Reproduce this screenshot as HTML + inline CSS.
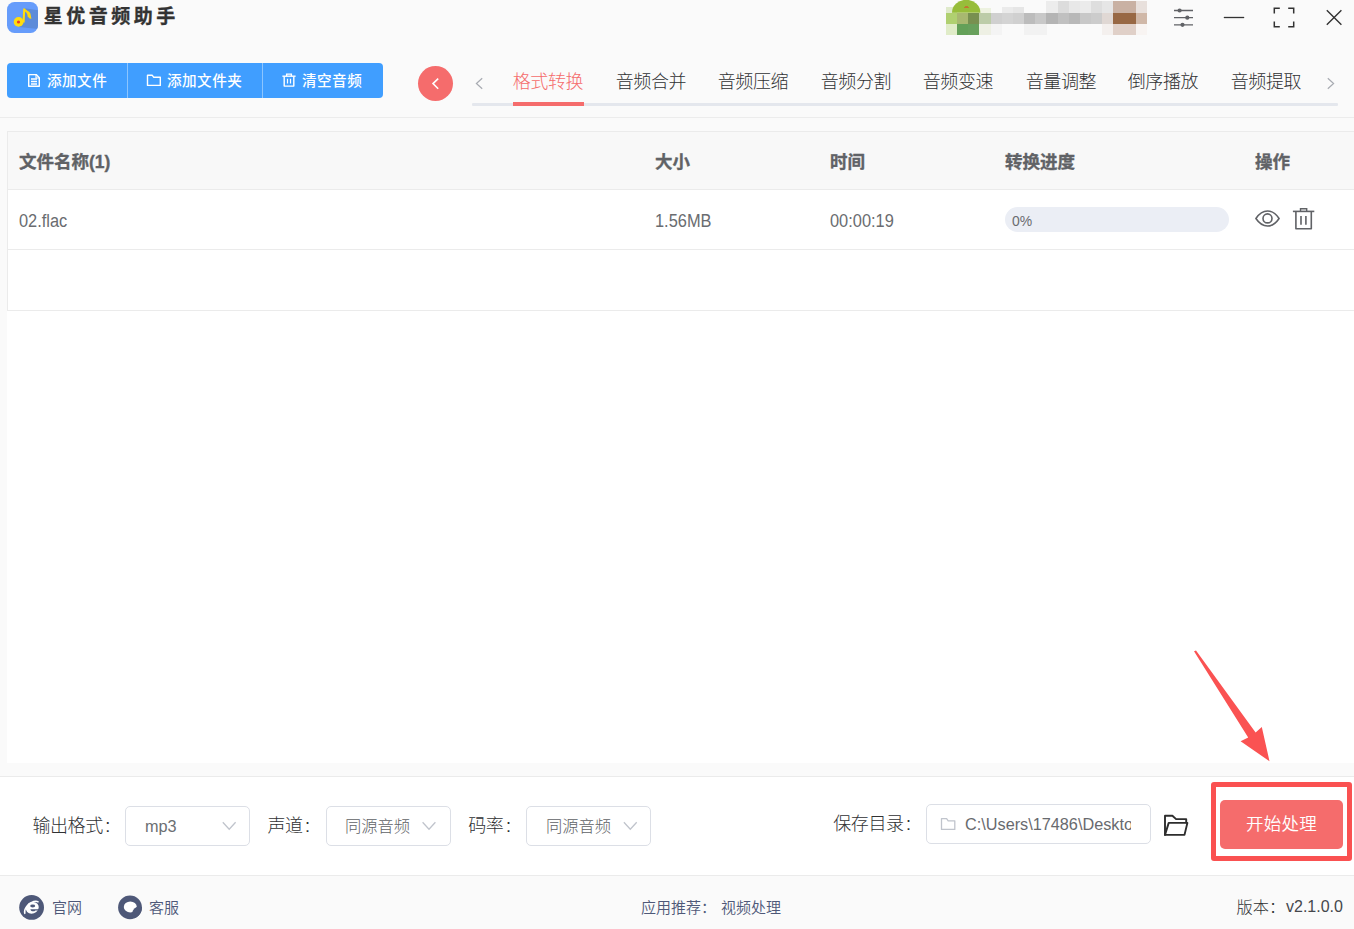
<!DOCTYPE html>
<html lang="zh-CN">
<head>
<meta charset="utf-8">
<title>星优音频助手</title>
<style>
*{box-sizing:border-box;margin:0;padding:0}
html,body{width:1354px;height:929px;overflow:hidden;background:#fafafa}
body{font-family:"Liberation Sans","Noto Sans CJK SC",sans-serif;color:#606266;position:relative}
.abs{position:absolute;white-space:nowrap}
/* title bar */
#logo{left:7px;top:2px;width:31px;height:31px}
#title{left:43.7px;top:1.5px;font-size:19px;line-height:30px;font-weight:700;color:#333;letter-spacing:3.5px;-webkit-text-stroke:.3px #333}
/* toolbar */
#btnbar{left:7px;top:63px;width:376px;height:35px;background:#409eff;border-radius:4px}
.tb{top:63.8px;height:35px;line-height:35px;color:#fff;font-size:14.6px;letter-spacing:.45px;font-weight:500}
.tbdiv{top:63px;width:1px;height:35px;background:#8cc5ff}
#back{left:418px;top:66px;width:35px;height:35px;border-radius:50%;background:#f56c6c}
/* tabs */
.tab{top:67.5px;height:28px;line-height:28px;font-size:18px;letter-spacing:-.4px;color:#303133;font-weight:300;margin-left:-.3px}
.tab.on{color:#f56c6c}
#tabline{left:472px;top:103px;width:866px;height:3px;background:#e4e7ed;border-radius:1px}
#tabon{left:513px;top:102px;width:71px;height:4px;background:#f56c6c}
#hline{left:0;top:117px;width:1354px;height:1px;background:#ececec}
/* table */
#table{left:7px;top:131px;width:1347px;height:632px;background:#fff}
#tleft{left:7px;top:131px;width:1px;height:180px;background:#ebebeb}
#thead{left:7px;top:131px;width:1347px;height:59px;background:#f8f8f8;border:1px solid #ebebeb;border-right:0}
.th{top:147px;height:30px;line-height:30px;font-size:17.5px;font-weight:700;color:#606266;-webkit-text-stroke:.35px #606266}
.td{top:206px;height:30px;line-height:30px;font-size:18px;color:#6a6c70;font-weight:300;transform:scaleX(.91);transform-origin:0 50%}
.rowline{left:8px;width:1346px;height:1px;background:#ebebeb}
#prog{left:1005px;top:207px;width:224px;height:25px;border-radius:13px;background:#ebeef5}
#progt{left:1011.5px;top:207.5px;height:25px;line-height:25px;font-size:15.5px;color:#6a6c70;transform:scaleX(.9);transform-origin:0 50%}
/* bottom panel */
#bottom{left:0;top:776px;width:1354px;height:100px;background:#fff;border-top:1px solid #ebebeb;border-bottom:1px solid #ebebeb}
.lbl{height:30px;line-height:30px;font-size:18px;letter-spacing:-.4px;margin-left:-.6px;margin-top:-.4px;color:#303133;font-weight:300}
.cl{margin-left:2.5px}
.sel{top:806px;width:125px;height:40px;border:1px solid #dcdfe6;border-radius:5px;background:#fff}
.selt{top:811px;height:30px;line-height:30px;font-size:16.25px;color:#606266;font-weight:300}
#dir{left:926px;top:804px;width:225px;height:40px;border:1px solid #dcdfe6;border-radius:5px;background:#fff}
#dirt{left:965px;top:809px;width:165.6px;overflow:hidden;height:30px;line-height:30px;font-size:16.25px;color:#686a6e}
#go{left:1220px;top:800px;width:123px;height:49px;border-radius:5px;background:#f56c6c;color:#fff;font-size:17.5px;line-height:48px;text-align:center;font-weight:350;letter-spacing:0.2px}
#mark{left:1211px;top:782px;width:141px;height:79px;border:5px solid #fa5151;border-radius:3px}
/* footer */
.ft{top:893px;height:30px;line-height:30px;font-size:15px;color:#4e5878;font-weight:350}
.fc{top:895px;width:25px;height:25px;border-radius:50%;background:#4d5675}
#ver{left:1236.5px;top:892px;height:30px;line-height:30px;font-size:16.25px;color:#303133;font-weight:300}
svg{position:absolute;overflow:visible}
</style>
</head>
<body>
<!-- TITLE BAR -->
<svg id="logo" class="abs" viewBox="0 0 31 31">
  <defs><clipPath id="lc"><rect width="31" height="31" rx="7.5"/></clipPath></defs>
  <rect width="31" height="31" rx="7.5" fill="#669cfb"/>
  <g clip-path="url(#lc)">
    <polygon points="17.5,6.2 31,8.2 31,27 12,25" fill="#5c8bd9"/>
  </g>
  <path d="M16.2 6.6 L18.3 6.6 L17.6 20.5 L15.4 20.5 Z" fill="#ffdc10"/>
  <path d="M17.8 6.8 C20 9 23.2 9.2 23.6 12.4 L24.4 16.8 L22.6 16.4 L20.6 14.6 C20.8 12.2 19.4 10.6 17.8 9.6 Z" fill="#ffd60a"/>
  <circle cx="11.6" cy="19.9" r="4.9" fill="#ffdc10"/>
  <circle cx="11.5" cy="20" r="1.6" fill="#ee3a2a"/>
</svg>
<div id="title" class="abs">星优音频助手</div>

<!-- mosaic user area -->
<svg class="abs" id="mosaic" style="left:946px;top:0;width:202px;height:36px" viewBox="0 0 202 36" shape-rendering="crispEdges">
  <rect x="0.0" y="6.5" width="11.26" height="6.2" fill="#dfeacb"/>
  <rect x="33.48" y="7.5" width="11.26" height="5.2" fill="#edf2e0"/>
  <rect x="55.8" y="7" width="11.26" height="5.7" fill="#ebebeb"/>
  <rect x="66.96" y="7" width="11.26" height="5.7" fill="#e6e6e6"/>
  <rect x="100.44" y="1" width="11.26" height="11.7" fill="#ececec"/>
  <rect x="111.6" y="1" width="11.26" height="11.7" fill="#dcdcdc"/>
  <rect x="122.76" y="1" width="11.26" height="11.7" fill="#e8e8e8"/>
  <rect x="133.92" y="1" width="11.26" height="11.7" fill="#ebebeb"/>
  <rect x="145.08" y="1" width="11.26" height="11.7" fill="#dedede"/>
  <rect x="156.24" y="1" width="11.26" height="11.7" fill="#e6e6e6"/>
  <rect x="167.4" y="1" width="11.26" height="11.7" fill="#c9b1a3"/>
  <rect x="178.56" y="1" width="11.26" height="11.7" fill="#c9b1a3"/>
  <rect x="189.72" y="1" width="11.26" height="11.7" fill="#e8e0dc"/>
  <rect x="0.0" y="12.7" width="11.26" height="11.1" fill="#b0d070"/>
  <rect x="11.16" y="12.7" width="11.26" height="11.1" fill="#a8b870"/>
  <rect x="22.32" y="12.7" width="11.26" height="11.1" fill="#789050"/>
  <rect x="33.48" y="12.7" width="11.26" height="11.1" fill="#bccca8"/>
  <rect x="44.64" y="12.7" width="11.26" height="11.1" fill="#d0d0d0"/>
  <rect x="55.8" y="12.7" width="11.26" height="11.1" fill="#d4d4d4"/>
  <rect x="66.96" y="12.7" width="11.26" height="11.1" fill="#d0d0d0"/>
  <rect x="78.12" y="12.7" width="11.26" height="11.1" fill="#bcbcbc"/>
  <rect x="89.28" y="12.7" width="11.26" height="11.1" fill="#c8c8c8"/>
  <rect x="100.44" y="12.7" width="11.26" height="11.1" fill="#b4b4b4"/>
  <rect x="111.6" y="12.7" width="11.26" height="11.1" fill="#c0c0c0"/>
  <rect x="122.76" y="12.7" width="11.26" height="11.1" fill="#b8b8b8"/>
  <rect x="133.92" y="12.7" width="11.26" height="11.1" fill="#c8c8c8"/>
  <rect x="145.08" y="12.7" width="11.26" height="11.1" fill="#cccccc"/>
  <rect x="156.24" y="12.7" width="11.26" height="11.1" fill="#e0d8d4"/>
  <rect x="167.4" y="12.7" width="11.26" height="11.1" fill="#986844"/>
  <rect x="178.56" y="12.7" width="11.26" height="11.1" fill="#986844"/>
  <rect x="189.72" y="12.7" width="11.26" height="11.1" fill="#d0b8a8"/>
  <rect x="0.0" y="23.8" width="11.26" height="11.0" fill="#e0ecc8"/>
  <rect x="11.16" y="23.8" width="11.26" height="11.0" fill="#64a058"/>
  <rect x="22.32" y="23.8" width="11.26" height="11.0" fill="#68a05c"/>
  <rect x="33.48" y="23.8" width="11.26" height="11.0" fill="#eef0e4"/>
  <rect x="44.64" y="23.8" width="11.26" height="11.0" fill="#f4f4f4"/>
  <rect x="78.12" y="23.8" width="11.26" height="11.0" fill="#f2f2f2"/>
  <rect x="89.28" y="23.8" width="11.26" height="11.0" fill="#f2f2f2"/>
  <rect x="156.24" y="23.8" width="11.26" height="11.0" fill="#f4f0ee"/>
  <rect x="167.4" y="23.8" width="11.26" height="11.0" fill="#e0d0c8"/>
  <rect x="178.56" y="23.8" width="11.26" height="11.0" fill="#e0d0c8"/>
  <rect x="189.72" y="23.8" width="11.26" height="11.0" fill="#f8f4f2"/>
  <path d="M6 12.8 A14.2 13 0 0 1 34.4 12.8 Z" fill="#97bd3a" shape-rendering="geometricPrecision"/>
  <ellipse cx="20.5" cy="7.3" rx="3" ry="1" fill="#c07830"/>
</svg>

<!-- window controls -->
<svg class="abs" style="left:1170px;top:4px;width:180px;height:28px" viewBox="1170 4 180 28" fill="none">
  <g stroke="#606266" stroke-width="1.3">
    <path d="M1174 10.5H1193M1174 17.7H1193M1174 24.8H1193"/>
  </g>
  <g fill="#606266"><circle cx="1179.6" cy="10.5" r="2.1"/><circle cx="1187.3" cy="17.7" r="2.1"/><circle cx="1182.5" cy="24.8" r="2.1"/></g>
  <path d="M1223.8 17.5H1244.2" stroke="#333" stroke-width="1.3"/>
  <path d="M1274.3 13.5V8.2H1279.8M1288.2 8.2H1293.7V13.5M1293.7 21.5V26.8H1288.2M1279.8 26.8H1274.3V21.5" stroke="#333" stroke-width="1.5"/>
  <path d="M1326.8 10.2L1341.4 24.8M1341.4 10.2L1326.8 24.8" stroke="#333" stroke-width="1.4"/>
</svg>

<!-- TOOLBAR -->
<div id="btnbar" class="abs"></div>
<div class="tbdiv abs" style="left:127px"></div>
<div class="tbdiv abs" style="left:262px"></div>
<div class="tb abs" style="left:47px">添加文件</div>
<div class="tb abs" style="left:167px">添加文件夹</div>
<div class="tb abs" style="left:302px">清空音频</div>

<div id="back" class="abs"></div>

<svg class="abs" style="left:0;top:60px;width:1354px;height:50px" viewBox="0 60 1354 50" fill="none">
  <!-- document icon -->
  <g stroke="#fff" stroke-width="1.4" stroke-linejoin="round">
    <path d="M28.7 74.6H36.2L39.3 77.8V86.2H28.7Z"/>
    <path d="M36 74.8V78H39.2" stroke-width="1.1"/>
    <path d="M31 79H37M31 81.5H37M31 84H37" stroke-width="1.5"/>
  </g>
  <!-- folder icon -->
  <path d="M147.5 75.3H152.3L153.8 77.3H160.3V85.4H147.5Z" stroke="#fff" stroke-width="1.4" stroke-linejoin="round"/>
  <!-- trash icon -->
  <g stroke="#fff" stroke-width="1.4">
    <path d="M282.4 76.2H295.6"/>
    <path d="M286.6 76V74.2H291.4V76" stroke-width="1.3"/>
    <path d="M284.2 76.4V86.1H293.8V76.4" stroke-linejoin="round"/>
    <path d="M287.5 78.8V83.6M290.5 78.8V83.6" stroke-width="1.2"/>
  </g>
  <!-- back chevron -->
  <path d="M438.2 78.6L433 83.6L438.2 88.7" stroke="#fff" stroke-width="1.6"/>
  <!-- tab arrows -->
  <path d="M482.2 78.2L476.4 83.5L482.2 88.8" stroke="#a8abb2" stroke-width="1.2"/>
  <path d="M1327.8 78.2L1333.6 83.5L1327.8 88.8" stroke="#a8abb2" stroke-width="1.2"/>
</svg>
<!-- TABS -->
<div id="tabline" class="abs"></div>
<div id="tabon" class="abs"></div>
<div class="tab on abs" style="left:513px">格式转换</div>
<div class="tab abs" style="left:616px">音频合并</div>
<div class="tab abs" style="left:718px">音频压缩</div>
<div class="tab abs" style="left:821px">音频分割</div>
<div class="tab abs" style="left:923px">音频变速</div>
<div class="tab abs" style="left:1026px">音量调整</div>
<div class="tab abs" style="left:1128px">倒序播放</div>
<div class="tab abs" style="left:1231px">音频提取</div>
<div id="hline" class="abs"></div>

<!-- TABLE -->
<div id="table" class="abs"></div>
<div id="tleft" class="abs"></div>
<div id="thead" class="abs"></div>
<div class="th abs" style="left:19px">文件名称(1)</div>
<div class="th abs" style="left:655px">大小</div>
<div class="th abs" style="left:830px">时间</div>
<div class="th abs" style="left:1005px">转换进度</div>
<div class="th abs" style="left:1255px">操作</div>
<div class="td abs" style="left:19px">02.flac</div>
<div class="td abs" style="left:655px">1.56MB</div>
<div class="td abs" style="left:830px">00:00:19</div>
<div id="prog" class="abs"></div>
<div id="progt" class="abs">0%</div>
<svg class="abs" style="left:1250px;top:200px;width:70px;height:36px" viewBox="1250 200 70 36" fill="none" stroke="#606266" stroke-width="1.6">
  <path d="M1255.9 218.5C1259.2 213.6 1263 211 1267.5 211C1272 211 1275.8 213.6 1279.1 218.5C1275.8 223.4 1272 226 1267.5 226C1263 226 1259.2 223.4 1255.9 218.5Z" stroke-linejoin="round"/>
  <circle cx="1267.5" cy="218.4" r="4.5"/>
  <path d="M1292.9 211.4H1314.3"/>
  <path d="M1300.5 211.2V208.8H1306.7V211.2" stroke-width="1.4"/>
  <path d="M1295.9 211.6V228.7H1311.3V211.6" stroke-linejoin="round"/>
  <path d="M1301 216V224.7M1305.9 216V224.7"/>
</svg>
<div class="rowline abs" style="top:249px"></div>
<div class="rowline abs" style="top:310px"></div>

<!-- BOTTOM PANEL -->
<div id="bottom" class="abs"></div>
<div class="lbl abs" style="left:33px;top:811px">输出格式<span class="cl">:</span></div>
<div class="sel abs" style="left:125px"></div>
<div class="selt abs" style="left:145px;color:#6c6e72">mp3</div>
<div class="lbl abs" style="left:268px;top:811px">声道<span class="cl">:</span></div>
<div class="sel abs" style="left:326px"></div>
<div class="selt abs" style="left:345px">同源音频</div>
<div class="lbl abs" style="left:468.8px;top:811px">码率<span class="cl">:</span></div>
<div class="sel abs" style="left:526px"></div>
<div class="selt abs" style="left:546px">同源音频</div>
<div class="lbl abs" style="left:833.8px;top:809.5px">保存目录<span class="cl">:</span></div>
<div id="dir" class="abs"></div>
<div id="dirt" class="abs">C:\Users\17486\Desktop</div>
<div id="go" class="abs">开始处理</div>
<div id="mark" class="abs"></div>

<svg class="abs" style="left:0;top:640px;width:1354px;height:230px" viewBox="0 640 1354 230" fill="none">
  <g stroke="#c0c4cc" stroke-width="1.3">
    <path d="M222.8 822.3L229.2 829.2L235.6 822.3"/>
    <path d="M422.6 822.3L429 829.2L435.4 822.3"/>
    <path d="M623.9 822.3L630.3 829.2L636.7 822.3"/>
    <path d="M941.5 818.6H946.6L948.2 820.8H954.8V829.4H941.5Z" stroke-linejoin="round"/>
  </g>
  <g stroke="#2d2d2d" stroke-width="1.9" stroke-linejoin="round" stroke-linecap="round">
    <path d="M1165 834.9V815.8H1172.4L1176.1 819.1H1186.2V822.4"/>
    <path d="M1168.7 822.9H1187.4L1184.5 834.9H1165Z"/>
  </g>
  <polygon points="1194.0,651.3 1196.0,650.5 1255.6,732.5 1261.8,726.9 1269.5,761.2 1240.6,741.2 1248.2,737.4" fill="#fa5252"/>
</svg>
<!-- FOOTER -->
<svg class="abs" style="left:15px;top:892px;width:135px;height:32px" viewBox="15 892 135 32" fill="none">
  <circle cx="31.6" cy="907.4" r="12.4" fill="#4e5878"/>
  <circle cx="130" cy="907.4" r="11.9" fill="#4e5878"/>
  <!-- IE style icon -->
  <g transform="translate(32.2 907.8)">
    <path d="M-7.4 5.6C-8.6 1.5 -4.5 -4.5 1.5 -6.3C3.3 -6.8 4.9 -6.7 5.9 -6" stroke="#fff" stroke-width="1.5" stroke-linecap="round"/>
    <ellipse cx="0.1" cy="0" rx="6.4" ry="5.9" fill="#fff" transform="skewX(-8)"/>
    <ellipse cx="0.5" cy="-1.8" rx="2.5" ry="1.4" fill="#4e5878"/>
    <path d="M-1.8 1.4H6.6V2.6H3.2C2.4 3.4 1.2 3.6 0 3.4C-1 3.2 -1.7 2.4 -1.8 1.4Z" fill="#4e5878"/>
  </g>
  <!-- chat bubble -->
  <defs><clipPath id="bc"><circle cx="130" cy="907.4" r="11.9"/></clipPath></defs>
  <ellipse cx="130.3" cy="906.9" rx="6.5" ry="5.5" fill="#fff"/>
  <circle cx="139.3" cy="913.4" r="7" fill="#4e5878" clip-path="url(#bc)"/>
</svg>
<div class="ft abs" style="left:52px">官网</div>
<div class="ft abs" style="left:149px">客服</div>
<div class="ft abs" style="left:641px">应用推荐：</div>
<div class="ft abs" style="left:721px">视频处理</div>
<div id="ver" class="abs">版本：<span style="position:absolute;left:49.5px;top:0;font-size:16px;color:#45474c">v2.1.0.0</span></div>
</body>
</html>
